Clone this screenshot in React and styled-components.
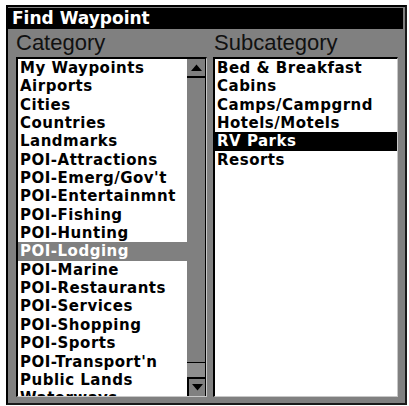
import React from "react";
import styled, { createGlobalStyle } from "styled-components";

const GlobalStyle = createGlobalStyle`
  html, body {
    margin: 0;
    padding: 0;
    background: #fff;
  }
`;

const categories = [
  "My Waypoints",
  "Airports",
  "Cities",
  "Countries",
  "Landmarks",
  "POI-Attractions",
  "POI-Emerg/Gov't",
  "POI-Entertainmnt",
  "POI-Fishing",
  "POI-Hunting",
  "POI-Lodging",
  "POI-Marine",
  "POI-Restaurants",
  "POI-Services",
  "POI-Shopping",
  "POI-Sports",
  "POI-Transport'n",
  "Public Lands",
  "Waterways",
];

const subcategories = [
  "Bed & Breakfast",
  "Cabins",
  "Camps/Campgrnd",
  "Hotels/Motels",
  "RV Parks",
  "Resorts",
];

const Frame = styled.div`
  margin: 5px 0 0 6px;
  width: 397px;
  height: 395px;
  border: 2px solid #000;
  border-right-color: #1a1a1a;
  border-bottom-color: #1a1a1a;
  background: #808080;
  padding: 1px 0 0 0;
  box-sizing: content-box;
  display: flex;
  flex-direction: column;
`;

const TitleBar = styled.div`
  height: 21px;
  margin-right: 2px;
  background: #000;
  color: #fff;
  font-family: "DejaVu Sans", sans-serif;
  font-weight: bold;
  font-size: 17px;
  line-height: 21px;
  padding-left: 4px;
`;

const Columns = styled.div`
  flex: 1;
  display: grid;
  grid-template-columns: 191px 185px;
  column-gap: 6px;
  padding: 0 7px 6px 8px;
  min-height: 0;
`;

const Column = styled.div`
  display: flex;
  flex-direction: column;
  min-height: 0;
`;

const Heading = styled.div`
  height: 28px;
  font-family: "Liberation Sans", Arial, sans-serif;
  font-size: 22px;
  line-height: 28px;
  color: #111;
  padding-left: ${(p) => p.$indent}px;
`;

const ListBox = styled.div`
  flex: 1;
  display: flex;
  background: #fff;
  border-top: 2px solid #000;
  border-left: 2px solid #000;
  border-bottom: 1px solid #c8c8c8;
  border-right: 1px solid #c8c8c8;
  overflow: hidden;
  min-height: 0;
`;

const Items = styled.ul`
  flex: 1;
  list-style: none;
  margin: 0;
  padding: 0;
  overflow: hidden;
`;

const Item = styled.li`
  height: 18.35px;
  line-height: 18.35px;
  padding-left: ${(p) => p.$pad}px;
  font-family: "DejaVu Sans", sans-serif;
  font-weight: bold;
  font-size: 15px;
  letter-spacing: 0.5px;
  white-space: nowrap;
  color: ${(p) => (p.$tone ? "#fff" : "#000")};
  background: ${(p) =>
    p.$tone === "dark" ? "#000" : p.$tone === "grey" ? "#808080" : "transparent"};
`;

const ScrollBar = styled.div`
  width: 18px;
  display: flex;
  flex-direction: column;
  background: #808080;
  border-right: 1px solid #000;
`;

const ArrowButton = styled.div`
  height: 17px;
  display: flex;
  align-items: center;
  justify-content: center;
  background: #808080;
  border-top: ${(p) => (p.$down ? "2px solid #000" : "none")};
  border-left: ${(p) => (p.$down ? "2px solid #000" : "none")};
  border-bottom: ${(p) => (p.$down ? "none" : "2px solid #000")};
`;

const Track = styled.div`
  flex: 1;
  display: flex;
  flex-direction: column;
  justify-content: flex-end;
`;

const Thumb = styled.div`
  height: 14px;
  border-top: 1px solid #000;
  background-color: #c0c0c0;
  background-image: radial-gradient(#8a8a8a 0.7px, transparent 0.8px);
  background-size: 2px 2px;
`;

const Arrow = ({ down }) => (
  <svg width="11" height="7" viewBox="0 0 11 7">
    <polygon points={down ? "0,0 11,0 5.5,6.5" : "0,7 11,7 5.5,0.5"} fill="#000" />
  </svg>
);

export default function App() {
  return (
    <>
      <GlobalStyle />
      <Frame>
        <TitleBar>Find Waypoint</TitleBar>
        <Columns>
          <Column>
            <Heading $indent={0}>Category</Heading>
            <ListBox>
              <Items>
                {categories.map((c) => (
                  <Item key={c} $pad={2} $tone={c === "POI-Lodging" ? "grey" : null}>
                    {c}
                  </Item>
                ))}
              </Items>
              <ScrollBar>
                <ArrowButton>
                  <Arrow />
                </ArrowButton>
                <Track>
                  <Thumb />
                </Track>
                <ArrowButton $down>
                  <Arrow down />
                </ArrowButton>
              </ScrollBar>
            </ListBox>
          </Column>
          <Column>
            <Heading $indent={1}>Subcategory</Heading>
            <ListBox>
              <Items>
                {subcategories.map((s) => (
                  <Item key={s} $pad={2} $tone={s === "RV Parks" ? "dark" : null}>
                    {s}
                  </Item>
                ))}
              </Items>
            </ListBox>
          </Column>
        </Columns>
      </Frame>
    </>
  );
}
